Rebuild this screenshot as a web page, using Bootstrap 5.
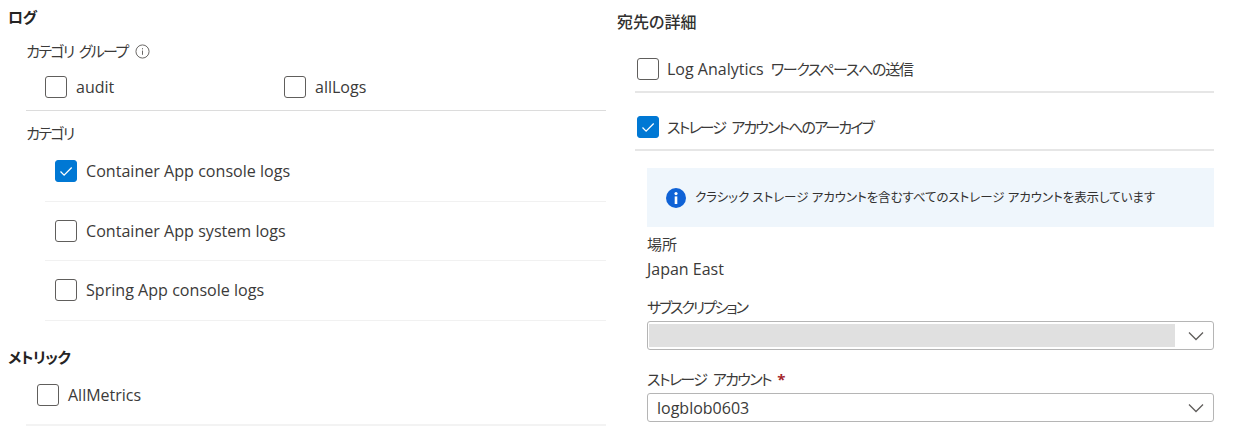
<!DOCTYPE html>
<html lang="ja">
<head>
<meta charset="utf-8">
<title>診断設定</title>
<link href="https://cdn.jsdelivr.net/npm/bootstrap@5.3.0/dist/css/bootstrap.min.css" rel="stylesheet">
<style>
html, body { height: 431px; overflow: hidden; background: #fff; }
body { font-family: "Open Sans", "Noto Sans CJK JP", sans-serif; color: #3b3a39; font-size: 16px; line-height: 22px; font-feature-settings: "palt"; }
.cols { width: 1214px; }
.left-pane { width: 606px; flex: none; margin-right: 11px; padding-top: 8px; }
.right-pane { flex: 1; min-width: 0; padding-top: 13px; }
.heading { font-weight: 700; color: #252423; font-size: 15px; letter-spacing: -.5px; margin: 0; height: 22px; }
.heading-detail { font-weight: 500; font-size: 16px; letter-spacing: 0; color: #323130; }
.sub-label { margin-left: 26px; height: 22px; font-size: 15px; letter-spacing: -1.6px; word-spacing: 3px; }
.info-mark { width: 15px; height: 15px; margin-left: 7px; }
.box { width: 22px; height: 22px; flex: none; border: 1px solid #605e5c; border-radius: 3px; background: #fff; margin-right: 9px; }
.box-on { background: #0078d4; border-color: #0078d4; }
.box-on svg { width: 20px; height: 20px; display: block; }
.chk { height: 22px; }
.group-row { padding-left: 45px; margin-top: 16px; padding-bottom: 12px; border-bottom: 1px solid #dcdcdc; margin-left: 0; }
.group-line { margin-left: 26px; padding-left: 19px; }
.group-item { width: 239px; }
.group-next { margin-top: 9px; }
.cat-row { margin-left: 45px; padding-left: 10px; height: 59.5px; border-bottom: 1px solid #f1f1f1; font-size: 16.1px; }
.metric-head { margin-top: 25px; }
.metric-row { margin-left: 26px; padding-left: 11px; border-bottom: 2px solid #f3f3f3; padding-bottom: 18px; margin-top: 16px; }
.dest-row { margin-left: 18px; padding-left: 2px; border-bottom: 2px solid #e6e6e6; padding-bottom: 11px; white-space: pre; }
.dest-row .box { margin-right: 8px; }
.dest-a { margin-top: 23px; }
.dest-b { margin-top: 23px; }
.tight-a { font-size: 15px; letter-spacing: -1.3px; margin-left: 3px; }
.tight-b { font-size: 15px; letter-spacing: -1.85px; word-spacing: 4px; }
.detail { margin-left: 30px; }
.notice { background: #eff6fc; height: 59px; margin-top: 17px; padding-left: 19px; font-size: 12.5px; letter-spacing: -.04px; color: #323130; }
.notice svg { width: 20px; height: 20px; flex: none; margin-right: 9px; }
.fld-label { height: 22px; font-size: 15px; letter-spacing: -1.6px; word-spacing: 4px; }
.fld-place { letter-spacing: 0; }
.fld-value { height: 22px; margin-top: 3px; }
.fld-first { margin-top: 6px; }
.fld-sub { margin-top: 16px; letter-spacing: -2.1px; }
.fld-acct { margin-top: 18px; }
.req { color: #a4262c; font-weight: 700; letter-spacing: 0; }
.picker { height: 29px; border: 1.5px solid #b5b5b5; border-radius: 3px; padding-left: 9px; background: #fff; margin-top: 3px; }
.picker svg { width: 16px; height: 10px; flex: none; margin-left: auto; margin-right: 9px; }
.masked { background: #e0e0e0; width: 526px; height: 23px; margin-left: -8px; }
</style>
</head>
<body class="m-0">
<div class="cols d-flex">
  <div class="left-pane">
    <h2 class="heading ms-2">ログ</h2>
    <div class="sub-label d-flex align-items-center mt-2 pt-1">カテゴリ グループ
      <svg class="info-mark" viewBox="0 0 16 16" fill="none" stroke="#605e5c"><circle cx="8" cy="8" r="7"/><path d="M8 7v4.5M8 4.4v1.3"/></svg>
    </div>
    <div class="group-line group-row d-flex">
      <label class="chk group-item d-flex align-items-center"><span class="box"></span>audit</label>
      <label class="chk d-flex align-items-center"><span class="box"></span>allLogs</label>
    </div>
    <div class="sub-label group-next d-flex align-items-center pt-1">カテゴリ</div>
    <div class="cat-row d-flex align-items-center"><span class="box box-on"><svg viewBox="0 0 20 20" fill="none" stroke="#fff" stroke-width="1.3"><path d="M4.5 10.5l3.6 3.6 7.6-7.6"/></svg></span>Container App console logs</div>
    <div class="cat-row d-flex align-items-center"><span class="box"></span>Container App system logs</div>
    <div class="cat-row d-flex align-items-center"><span class="box"></span>Spring App console logs</div>
    <h2 class="heading metric-head ms-2 d-flex align-items-center">メトリック</h2>
    <div class="metric-row d-flex align-items-center"><span class="box"></span>AllMetrics</div>
  </div>
  <div class="right-pane">
    <h2 class="heading heading-detail">宛先の詳細</h2>
    <div class="dest-row dest-a d-flex align-items-center"><span class="box"></span><span>Log Analytics <span class="tight-a">ワークスペースへの送信</span></span></div>
    <div class="dest-row dest-b d-flex align-items-center"><span class="box box-on"><svg viewBox="0 0 20 20" fill="none" stroke="#fff" stroke-width="1.3"><path d="M4.5 10.5l3.6 3.6 7.6-7.6"/></svg></span><span class="tight-b">ストレージ アカウントへのアーカイブ</span></div>
    <div class="detail">
      <div class="notice d-flex align-items-center">
        <svg viewBox="0 0 20 20"><circle cx="10" cy="10" r="10" fill="#0f62d6"/><rect x="8.7" y="8.4" width="2.6" height="7.6" fill="#fff"/><circle cx="10" cy="5.6" r="1.6" fill="#fff"/></svg>
        クラシック ストレージ アカウントを含むすべてのストレージ アカウントを表示しています
      </div>
      <div class="fld-label fld-place fld-first d-flex align-items-center">場所</div>
      <div class="fld-value d-flex align-items-center">Japan East</div>
      <div class="fld-label fld-sub d-flex align-items-center">サブスクリプション</div>
      <div class="picker d-flex align-items-center"><span class="masked"></span><svg viewBox="0 0 16 10" fill="none" stroke="#605e5c" stroke-width="1.3"><path d="M1 1.5l7 7 7-7"/></svg></div>
      <div class="fld-label fld-acct d-flex align-items-center"><span>ストレージ アカウント <span class="req">*</span></span></div>
      <div class="picker d-flex align-items-center">logblob0603<svg viewBox="0 0 16 10" fill="none" stroke="#605e5c" stroke-width="1.3"><path d="M1 1.5l7 7 7-7"/></svg></div>
    </div>
  </div>
</div>
<script src="https://cdn.jsdelivr.net/npm/bootstrap@5.3.0/dist/js/bootstrap.bundle.min.js"></script>
</body>
</html>
